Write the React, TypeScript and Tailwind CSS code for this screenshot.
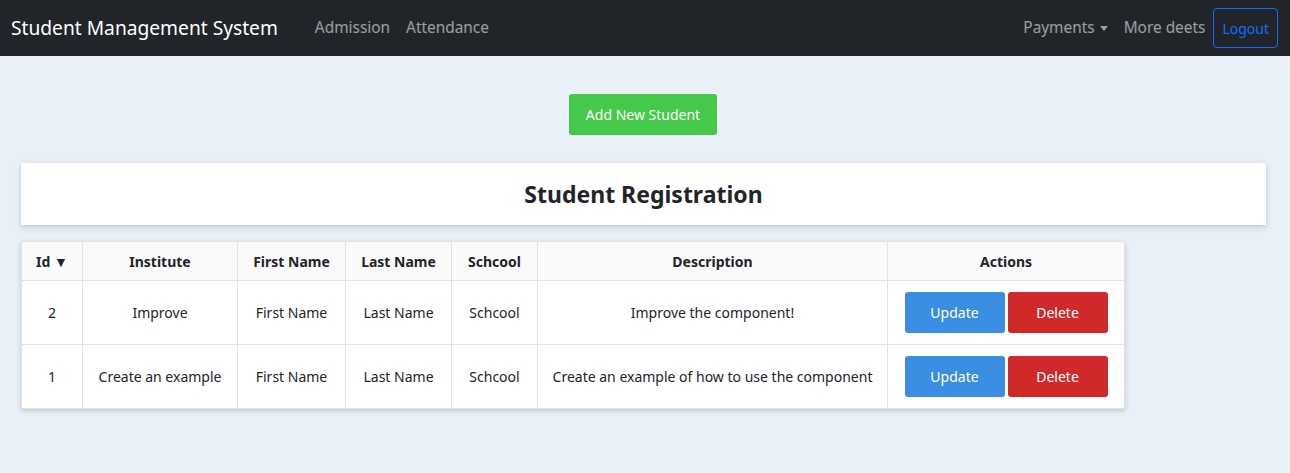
const rows = [
  { id: 2, institute: "Improve", first: "First Name", last: "Last Name", school: "Schcool", desc: "Improve the component!" },
  { id: 1, institute: "Create an example", first: "First Name", last: "Last Name", school: "Schcool", desc: "Create an example of how to use the component" },
];

const Navbar = () => (
  <nav className="h-[56px] bg-[#212529] flex items-center justify-between pl-[11px] pr-[12px]">
    <div className="flex items-center">
      <span className="text-[19.2px] text-white mr-[37px]">Student Management System</span>
      <a className="text-[15.4px] text-white/55 mr-[16px]">Admission</a>
      <a className="text-[15.4px] text-white/55">Attendance</a>
    </div>
    <div className="flex items-center">
      <a className="text-[15.4px] text-white/55 flex items-center mr-[16px]">
        Payments
        <span className="ml-[5px] border-t-[5px] border-x-[4px] border-x-transparent border-t-white/55 mt-[2px]" />
      </a>
      <a className="text-[15.4px] text-white/55 mr-[8px]">More deets</a>
      <button className="h-[40px] px-[8px] border border-[#0d6efd] rounded-[4px] text-[14px] text-[#0d6efd]">Logout</button>
    </div>
  </nav>
);

export default function App() {
  return (
    <div className="min-h-[473px] bg-[#e9f0f8] text-[#212529]" style={{ fontFamily: '"Noto Sans", sans-serif' }}>
      <Navbar />
      <div className="flex justify-center pt-[38px] pr-[4px]">
        <button className="w-[148px] h-[41px] bg-[#44c94a] rounded-[3px] text-white text-[14px]">Add New Student</button>
      </div>
      <div className="mx-[21px] mt-[28px] mr-[24px] h-[62px] bg-white shadow-[0_2px_6px_rgba(0,0,0,0.18)] flex items-center justify-center">
        <h2 className="text-[23px] font-bold">Student Registration</h2>
      </div>
      <div className="ml-[21px] mt-[16px] w-[1104px] bg-white shadow-[0_2px_5px_rgba(0,0,0,0.18)]">
        <table className="w-full border-collapse text-[14px] text-center">
          <thead>
            <tr className="h-[39px] bg-[#fafafa] font-bold">
              <th className="w-[61px] border border-[#e2e2e2]">Id ▼</th>
              <th className="w-[155px] border border-[#e2e2e2]">Institute</th>
              <th className="w-[108px] border border-[#e2e2e2]">First Name</th>
              <th className="w-[106px] border border-[#e2e2e2]">Last Name</th>
              <th className="w-[86px] border border-[#e2e2e2]">Schcool</th>
              <th className="w-[350px] border border-[#e2e2e2]">Description</th>
              <th className="border border-[#e2e2e2]">Actions</th>
            </tr>
          </thead>
          <tbody>
            {rows.map((r) => (
              <tr key={r.id} className="h-[64px]">
                <td className="border border-[#e2e2e2]">{r.id}</td>
                <td className="border border-[#e2e2e2]">{r.institute}</td>
                <td className="border border-[#e2e2e2]">{r.first}</td>
                <td className="border border-[#e2e2e2]">{r.last}</td>
                <td className="border border-[#e2e2e2]">{r.school}</td>
                <td className="border border-[#e2e2e2]">{r.desc}</td>
                <td className="border border-[#e2e2e2]">
                  <div className="flex justify-center gap-[3px]">
                    <button className="w-[100px] h-[41px] bg-[#3a8ee2] rounded-[3px] text-white">Update</button>
                    <button className="w-[100px] h-[41px] bg-[#d0292a] rounded-[3px] text-white">Delete</button>
                  </div>
                </td>
              </tr>
            ))}
          </tbody>
        </table>
      </div>
    </div>
  );
}
